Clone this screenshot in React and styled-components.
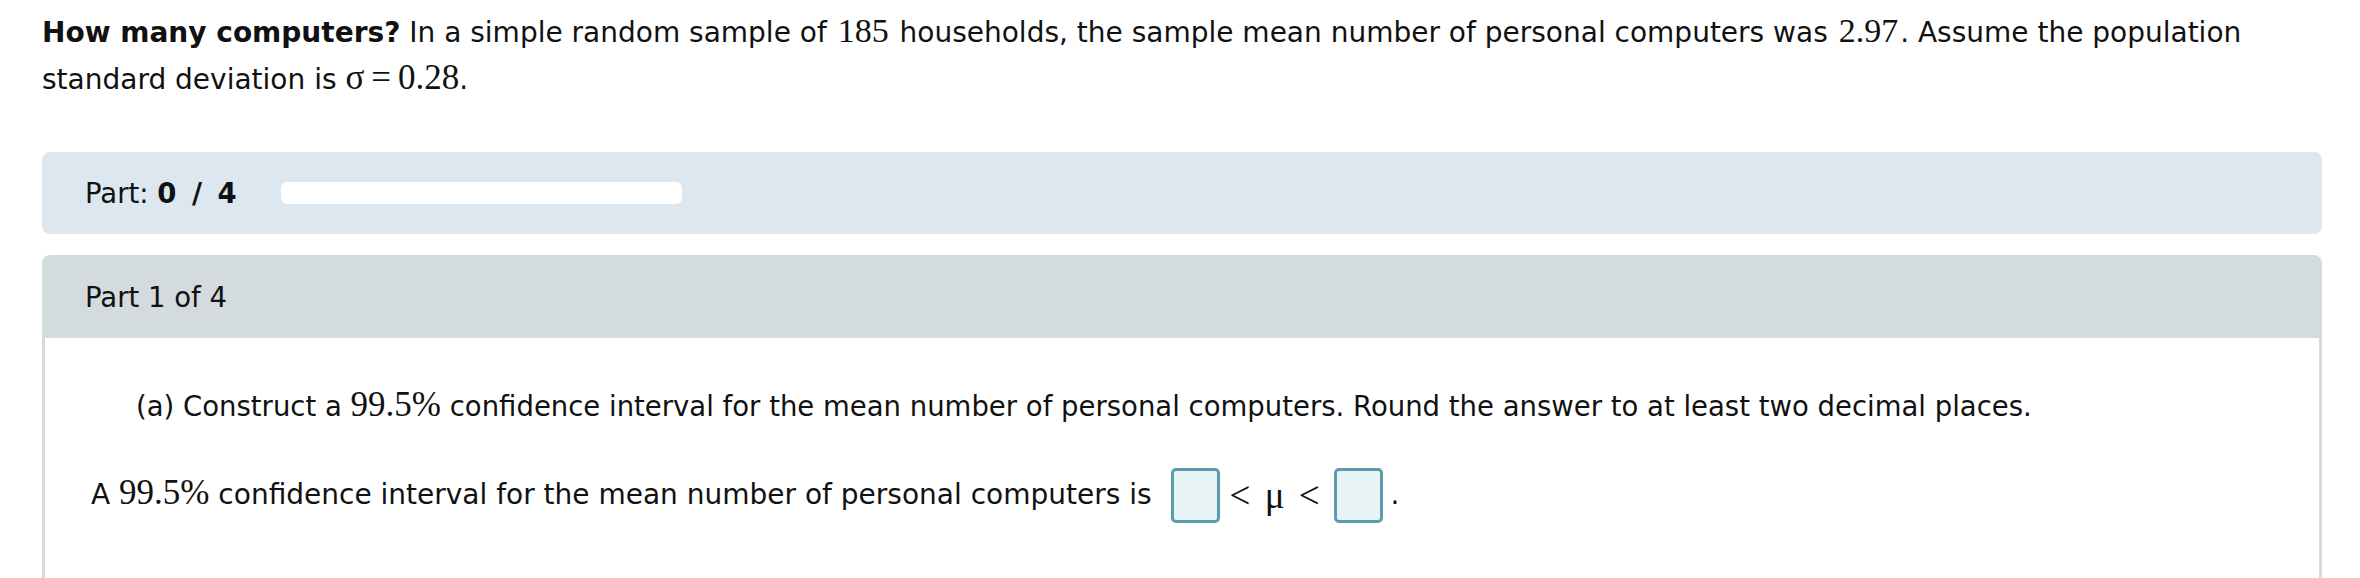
import React from "react";
import styled, { createGlobalStyle } from "styled-components";

const GlobalStyle = createGlobalStyle`
  html, body {
    margin: 0;
    padding: 0;
    background: #ffffff;
  }
  body {
    font-family: "DejaVu Sans", Verdana, sans-serif;
    color: #111111;
  }
`;

const Page = styled.div`
  padding: 9px 38px 0 42px;
  height: 578px;
  box-sizing: border-box;
  overflow: hidden;
`;

const Question = styled.p`
  margin: 0;
  padding-right: 40px;
  font-size: 28px;
  line-height: 47px;
`;

const Num = styled.span`
  font-family: "Liberation Serif", "Times New Roman", serif;
  font-size: ${(p) => p.$size || 34}px;
  line-height: 1;
  margin: 0 ${(p) => p.$pad || 0}px;
`;

const Relation = styled(Num)`
  word-spacing: 5px;
`;

const ProgressCard = styled.div`
  margin-top: 49px;
  height: 82px;
  display: flex;
  align-items: center;
  padding-left: 43px;
  background: #dce7f0;
  border-radius: 8px;
  font-size: 27.5px;
`;

const ProgressLabel = styled.span`
  width: 196px;
  flex: none;
  b {
    word-spacing: 6px;
  }
`;

const ProgressTrack = styled.div`
  width: 401px;
  height: 22px;
  background: #ffffff;
  border-radius: 6px;
`;

const PartCard = styled.section`
  margin-top: 21px;
`;

const PartHeader = styled.div`
  height: 83px;
  display: flex;
  align-items: center;
  padding-left: 43px;
  background: #d3dbde;
  border-radius: 8px 8px 0 0;
  font-size: 27.5px;
`;

const PartBody = styled.div`
  border-left: 3px solid #d3dbde;
  border-right: 3px solid #d3dbde;
  height: 300px;
  padding-top: 44px;
`;

const Prompt = styled.p`
  margin: 0 0 0 91px;
  font-size: 27.5px;
  line-height: 48px;
`;

const AnswerLine = styled.p`
  margin: 37px 0 0 46px;
  font-size: 28px;
  line-height: 56px;
  display: flex;
  align-items: center;
`;

const AnswerBox = styled.span`
  display: inline-block;
  box-sizing: border-box;
  width: 49px;
  height: 55px;
  margin: 0 ${(p) => p.$right}px 0 ${(p) => p.$left}px;
  background: #e8f3f6;
  border: 3px solid #5d9cac;
  border-radius: 5px;
`;

const Pre = styled.span`
  white-space: pre;
`;

export default function App() {
  return (
    <>
      <GlobalStyle />
      <Page>
        <Question>
          <b>How many computers?</b> In a simple random sample of{" "}
          <Num $pad={2}>185</Num> households, the sample mean number of
          personal computers was <Num $pad={2}>2.97</Num>. Assume the
          population standard deviation is{" "}
          <Num $size={35}>σ{"\u2009"}={"\u2009"}0.28</Num>.
        </Question>

        <ProgressCard>
          <ProgressLabel>
            Part: <b>0 / 4</b>
          </ProgressLabel>
          <ProgressTrack />
        </ProgressCard>

        <PartCard>
          <PartHeader>Part 1 of 4</PartHeader>
          <PartBody>
            <Prompt>
              (a) Construct a <Num $size={35}>99.5%</Num> confidence interval
              for the mean number of personal computers. Round the answer to at
              least two decimal places.
            </Prompt>
            <AnswerLine>
              <Pre>
                A <Num $size={35}>99.5%</Num> confidence interval for the mean
                number of personal computers is
              </Pre>
              <AnswerBox $left={19} $right={10} />
              <Relation $size={37}>&lt; μ &lt;</Relation>
              <AnswerBox $left={14} $right={8} />
              <span>.</span>
            </AnswerLine>
          </PartBody>
        </PartCard>
      </Page>
    </>
  );
}
